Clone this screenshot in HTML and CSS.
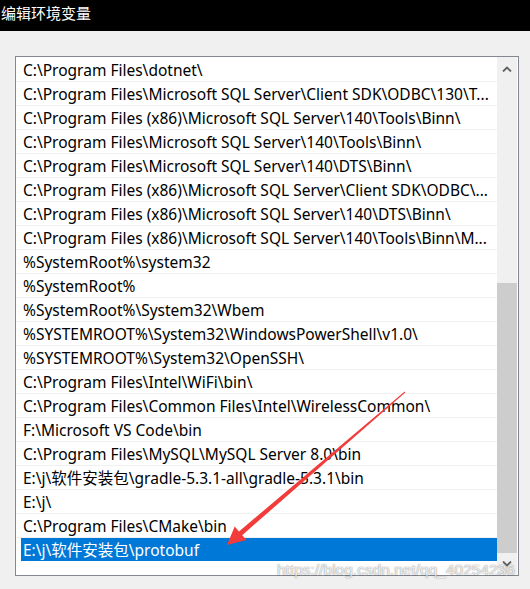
FILE: index.html
```html
<!DOCTYPE html>
<html lang="zh-CN">
<head>
<meta charset="utf-8">
<title>编辑环境变量</title>
<link rel="stylesheet" href="styles.css">
</head>
<body>
<div class="titlebar"><span class="title">编辑环境变量</span></div>
<div class="dialog">
  <div class="listbox">
    <div class="list">
      <div class="row">C:\Program Files\dotnet\</div>
      <div class="row">C:\Program Files\Microsoft SQL Server\Client SDK\ODBC\130\T...</div>
      <div class="row">C:\Program Files (x86)\Microsoft SQL Server\140\Tools\Binn\</div>
      <div class="row">C:\Program Files\Microsoft SQL Server\140\Tools\Binn\</div>
      <div class="row">C:\Program Files\Microsoft SQL Server\140\DTS\Binn\</div>
      <div class="row">C:\Program Files (x86)\Microsoft SQL Server\Client SDK\ODBC\...</div>
      <div class="row">C:\Program Files (x86)\Microsoft SQL Server\140\DTS\Binn\</div>
      <div class="row">C:\Program Files (x86)\Microsoft SQL Server\140\Tools\Binn\M...</div>
      <div class="row">%SystemRoot%\system32</div>
      <div class="row">%SystemRoot%</div>
      <div class="row">%SystemRoot%\System32\Wbem</div>
      <div class="row">%SYSTEMROOT%\System32\WindowsPowerShell\v1.0\</div>
      <div class="row">%SYSTEMROOT%\System32\OpenSSH\</div>
      <div class="row">C:\Program Files\Intel\WiFi\bin\</div>
      <div class="row">C:\Program Files\Common Files\Intel\WirelessCommon\</div>
      <div class="row">F:\Microsoft VS Code\bin</div>
      <div class="row">C:\Program Files\MySQL\MySQL Server 8.0\bin</div>
      <div class="row">E:\j\软件安装包\gradle-5.3.1-all\gradle-5.3.1\bin</div>
      <div class="row">E:\j\</div>
      <div class="row">C:\Program Files\CMake\bin</div>
      <div class="row selected"><span class="sel">E:\j\软件安装包\protobuf</span></div>
    </div>
    <div class="scrollbar">
      <div class="sbtn up"><svg width="10" height="6" viewBox="0 0 10 6"><path d="M1 5.5 L5 1.5 L9 5.5" fill="none" stroke="#606060" stroke-width="1.8"/></svg></div>
      <div class="track"><div class="thumb"></div></div>
      <div class="sbtn down"><svg width="10" height="6" viewBox="0 0 10 6"><path d="M1 0.5 L5 4.5 L9 0.5" fill="none" stroke="#606060" stroke-width="1.8"/></svg></div>
    </div>
  </div>
</div>
<svg class="arrow" width="530" height="589" viewBox="0 0 530 589">
  <polygon points="227,545 246.5,540 242.2,535.2 405.3,392.4 404.7,391.6 239,531.4 234.7,526.5" fill="#f23c3c"/>
</svg>
<div class="watermark">https://blog.csdn.net/qq_40254236</div>
</body>
</html>
```
FILE: styles.css
```css
html, body {
  margin: 0;
  padding: 0;
}
body {
  width: 530px;
  height: 589px;
  background: #f0f0f0;
  position: relative;
  overflow: hidden;
  font-family: "Noto Sans", "Noto Sans CJK SC", sans-serif;
}
.titlebar {
  height: 31px;
  background: #000;
  box-sizing: border-box;
  padding: 2px 0 0 1px;
}
.title {
  color: #fff;
  font-family: "Noto Sans CJK SC", sans-serif;
  font-size: 15px;
  line-height: 20px;
}
.dialog {
  padding: 25px 0 0 15px;
}
.listbox {
  width: 504px;
  height: 520px;
  box-sizing: border-box;
  border: 1px solid #828790;
  background: #fff;
  display: flex;
}
.list {
  width: 481px;
  padding-top: 1px;
}
.row {
  height: 24px;
  box-sizing: border-box;
  border-bottom: 1px solid #f0f0f0;
  padding-left: 7px;
  font-size: 15.5px;
  line-height: 24px;
  color: #000;
  white-space: nowrap;
  overflow: hidden;
}
.row.selected {
  padding-left: 5px;
  border-bottom-color: #fff;
}
.sel {
  display: block;
  height: 23px;
  background: #0078d7;
  color: #fff;
  padding-left: 2px;
}
.scrollbar {
  width: 20px;
  background: #f0f0f0;
  display: flex;
  flex-direction: column;
}
.sbtn {
  display: flex;
  align-items: center;
  justify-content: center;
}
.sbtn.up {
  height: 20px;
  padding-top: 3px;
  box-sizing: border-box;
}
.sbtn.down {
  height: 22px;
}
.track {
  flex: 1;
  display: flex;
  flex-direction: column;
  padding-top: 206px;
}
.thumb {
  height: 270px;
  background: #cdcdcd;
}
.arrow {
  position: absolute;
  left: 0;
  top: 0;
}
.watermark {
  position: absolute;
  left: 277px;
  top: 559px;
  font-family: "Liberation Sans", sans-serif;
  font-size: 15.5px;
  line-height: 22px;
  color: rgba(255, 255, 255, 0.85);
  text-shadow: 0 0 1px rgba(0, 0, 0, 0.45), 0 0 2px rgba(0, 0, 0, 0.2);
  white-space: nowrap;
}
```
